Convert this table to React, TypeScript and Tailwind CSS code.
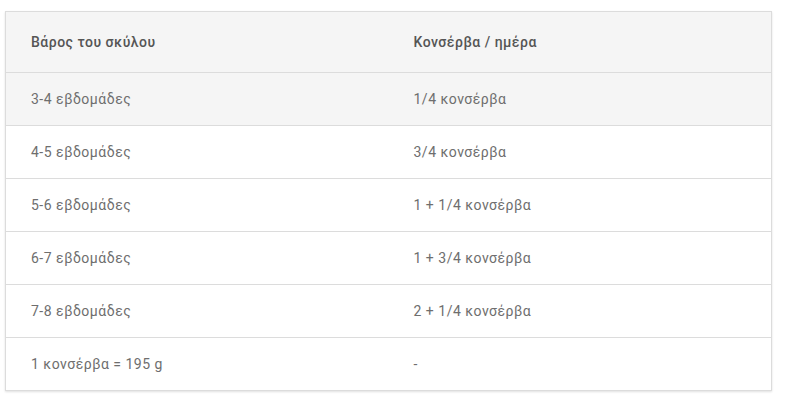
const rows: [string, string][] = [
  ["3-4 εβδομάδες", "1/4 κονσέρβα"],
  ["4-5 εβδομάδες", "3/4 κονσέρβα"],
  ["5-6 εβδομάδες", "1 + 1/4 κονσέρβα"],
  ["6-7 εβδομάδες", "1 + 3/4 κονσέρβα"],
  ["7-8 εβδομάδες", "2 + 1/4 κονσέρβα"],
  ["1 κονσέρβα = 195 g", "-"],
];

export default function App() {
  return (
    <div className="h-[411px] w-[786px] bg-white pl-[5px] pt-[11px] font-['Roboto',sans-serif] tracking-[0.5px]">
      <div className="w-[767px] border border-[#dcdcdc] shadow-[0_1px_2px_rgba(0,0,0,0.12)]">
        <div className="grid h-[60px] grid-cols-2 items-center bg-[#f5f5f5] text-[14px] font-medium text-[#555]">
          <div className="pl-[25px]">Βάρος του σκύλου</div>
          <div className="pl-[25px]">Κονσέρβα / ημέρα</div>
        </div>
        {rows.map(([a, b], i) => (
          <div
            key={i}
            className={`grid h-[53px] grid-cols-2 items-center border-t border-[#dcdcdc] text-[14px] text-[#6e6e6e] ${
              i === 0 ? "bg-[#f5f5f5]" : "bg-white"
            }`}>
            <div className="pl-[25px]">{a}</div>
            <div className="pl-[25px]">{b}</div>
          </div>
        ))}
      </div>
    </div>
  );
}
